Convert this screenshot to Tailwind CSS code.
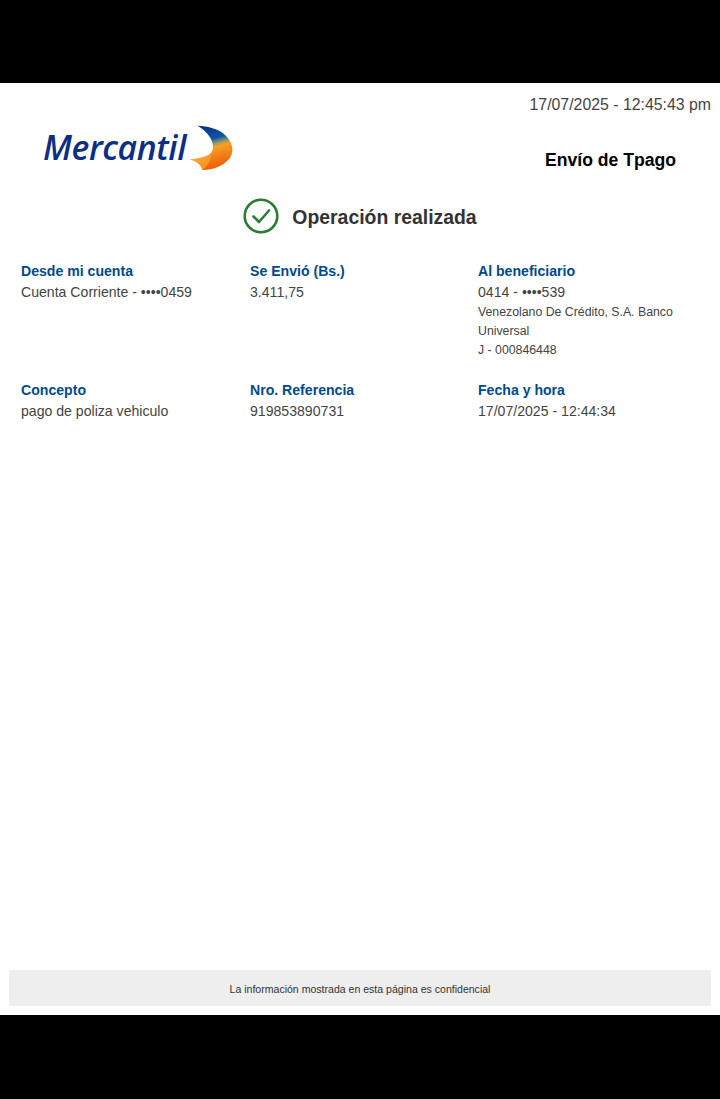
<!DOCTYPE html>
<html lang="en">
<head>
  <meta charset="UTF-8" />
  <title>Envío de Tpago</title>
  <script src="https://cdn.jsdelivr.net/npm/@tailwindcss/browser@4"></script>
</head>
<body class="bg-black font-['Liberation_Sans',Arial,sans-serif]">
  <div class="h-[1099px] flex flex-col">
    <div class="h-[83px] bg-black"></div>

    <main class="h-[932px] bg-white flex flex-col">
      <p class="pt-[12px] pr-[9px] text-right text-[15.85px] leading-[20px] text-[#444]">17/07/2025 - 12:45:43 pm</p>

      <!-- logo + titulo -->
      <div class="h-[62px] mt-[1px] flex items-center justify-between pl-[43px] pr-[44px]">
        <div class="flex items-center">
          <span class="font-['Open_Sans',sans-serif] italic font-semibold text-[33.7px] leading-[40px] tracking-[-0.4px] text-[#0a2f85]">Mercantil</span>
          <svg class="ml-[2px] mt-[2px]" width="46" height="46" viewBox="0 0 46 46">
            <defs>
              <linearGradient id="crescent" x1="0.35" y1="0" x2="0.6" y2="1">
                <stop offset="0" stop-color="#0a2f85" />
                <stop offset="0.32" stop-color="#0d58a5" />
                <stop offset="0.42" stop-color="#8a9468" />
                <stop offset="0.5" stop-color="#f8a020" />
                <stop offset="1" stop-color="#ec560c" />
              </linearGradient>
              <linearGradient id="fold" x1="0" y1="0" x2="1" y2="1">
                <stop offset="0" stop-color="#fbb545" />
                <stop offset="1" stop-color="#f68a12" />
              </linearGradient>
            </defs>
            <path d="M9.3 .7 C20 1 32 4 38 11 C44 17 46 24 43 31 C39 39 27 45 14.3 45 C14 41 10 37 2 34.3 C10 34 19 32 23 28 C28 22 24 9 9.3 .7 Z" fill="url(#crescent)" />
            <path d="M2 34.3 C10 34 19 32 23 28 C24 33 21 40 14.3 45 C14 41 10 37 2 34.3 Z" fill="url(#fold)" />
          </svg>
        </div>
        <h1 class="text-[17.6px] leading-[22px] mt-[26px] font-bold text-black">Envío de Tpago</h1>
      </div>

      <!-- estado -->
      <div class="mt-[20px] flex items-center justify-center gap-[13px] h-[36px]">
        <svg width="36" height="36" viewBox="0 0 36 36" fill="none" stroke="#2e7d32">
          <circle cx="18" cy="18" r="16.3" stroke-width="2.6" />
          <path d="M10.5 18.5 L16 24 L26 12.5" stroke-width="2.6" stroke-linecap="round" stroke-linejoin="round" />
        </svg>
        <h2 class="text-[19.4px] leading-[24px] mt-[1px] font-bold text-[#333]">Operación realizada</h2>
      </div>

      <!-- datos -->
      <div class="mt-[28px] pl-[21px] grid grid-cols-[229px_228px_1fr] gap-y-[21px]">
        <div>
          <p class="text-[14.1px] leading-[19px] font-bold text-[#004a8f]">Desde mi cuenta</p>
          <p class="mt-[1px] text-[14.1px] leading-[21px] text-[#444]">Cuenta Corriente - ••••0459</p>
        </div>
        <div>
          <p class="text-[14.1px] leading-[19px] font-bold text-[#004a8f]">Se Envió (Bs.)</p>
          <p class="mt-[1px] text-[14.1px] leading-[21px] text-[#444]">3.411,75</p>
        </div>
        <div>
          <p class="text-[14.1px] leading-[19px] font-bold text-[#004a8f]">Al beneficiario</p>
          <p class="mt-[1px] text-[14.1px] leading-[21px] text-[#444]">0414 - ••••539</p>
          <p class="w-[210px] text-[12.3px] leading-[19px] text-[#444]">Venezolano De Crédito, S.A. Banco Universal</p>
          <p class="text-[12.3px] leading-[19px] text-[#444]">J - 000846448</p>
        </div>
        <div>
          <p class="text-[14.1px] leading-[19px] font-bold text-[#004a8f]">Concepto</p>
          <p class="mt-[1px] text-[14.1px] leading-[21px] text-[#444]">pago de poliza vehiculo</p>
        </div>
        <div>
          <p class="text-[14.1px] leading-[19px] font-bold text-[#004a8f]">Nro. Referencia</p>
          <p class="mt-[1px] text-[14.1px] leading-[21px] text-[#444]">919853890731</p>
        </div>
        <div>
          <p class="text-[14.1px] leading-[19px] font-bold text-[#004a8f]">Fecha y hora</p>
          <p class="mt-[1px] text-[14.1px] leading-[21px] text-[#444]">17/07/2025 - 12:44:34</p>
        </div>
      </div>

      <footer class="mt-auto mb-[9px] mx-[9px] h-[36px] pt-[2px] bg-[#eeeeee] flex items-center justify-center">
        <p class="text-[10.56px] leading-[12px] text-[#333]">La información mostrada en esta página es confidencial</p>
      </footer>
    </main>

    <div class="flex-1 bg-black"></div>
  </div>
</body>
</html>
